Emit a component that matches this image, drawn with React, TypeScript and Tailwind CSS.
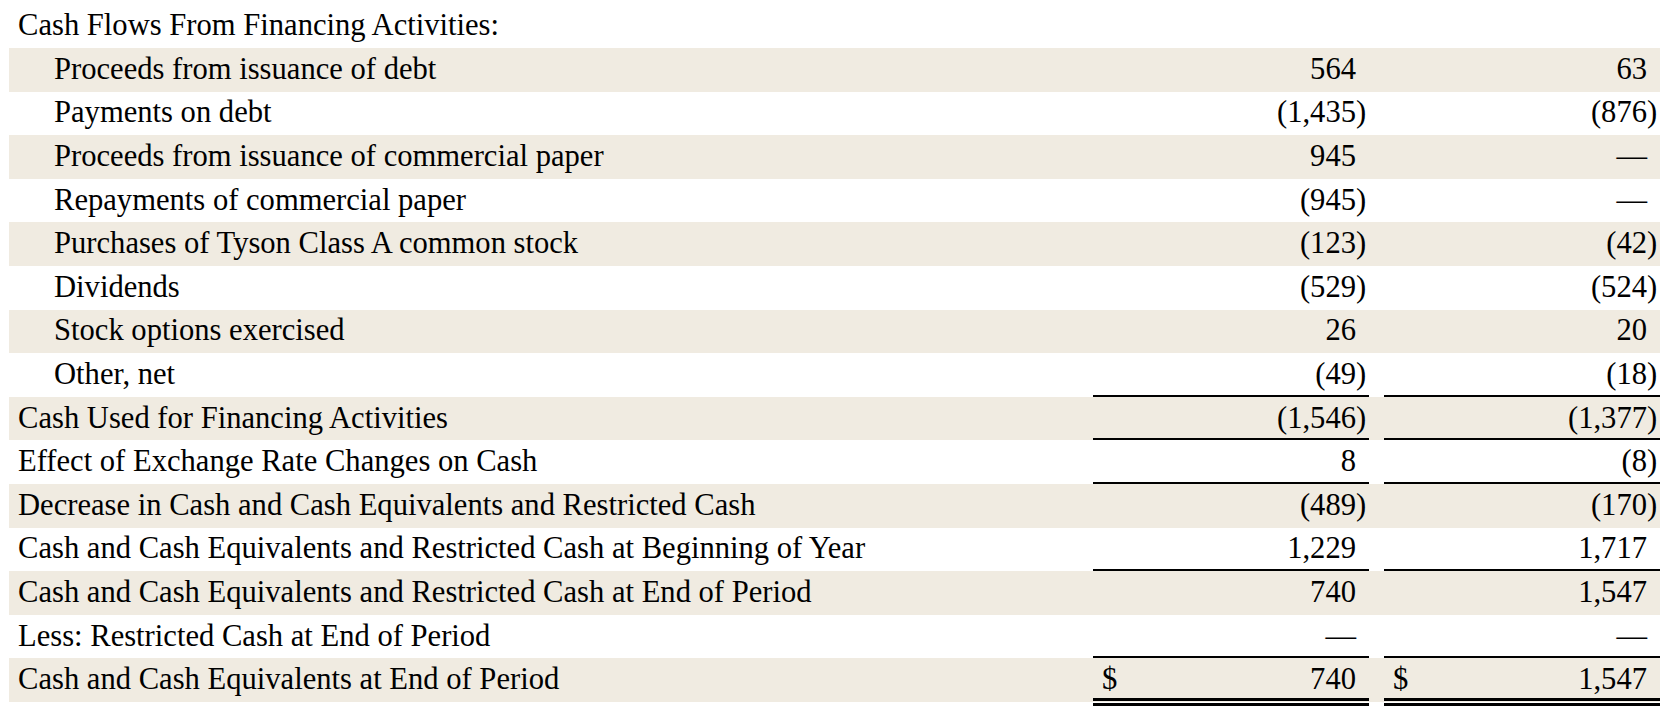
import React from 'react';

type Rule = 'none' | 'single' | 'double';

interface Line {
  label: string;
  indent?: boolean;
  cur: string;
  prior: string;
  rule?: Rule;
  dollar?: boolean;
}

const lines: Line[] = [
  { label: 'Proceeds from issuance of debt', indent: true, cur: '564', prior: '63' },
  { label: 'Payments on debt', indent: true, cur: '(1,435)', prior: '(876)' },
  { label: 'Proceeds from issuance of commercial paper', indent: true, cur: '945', prior: '—' },
  { label: 'Repayments of commercial paper', indent: true, cur: '(945)', prior: '—' },
  { label: 'Purchases of Tyson Class A common stock', indent: true, cur: '(123)', prior: '(42)' },
  { label: 'Dividends', indent: true, cur: '(529)', prior: '(524)' },
  { label: 'Stock options exercised', indent: true, cur: '26', prior: '20' },
  { label: 'Other, net', indent: true, cur: '(49)', prior: '(18)', rule: 'single' },
  { label: 'Cash Used for Financing Activities', cur: '(1,546)', prior: '(1,377)', rule: 'single' },
  { label: 'Effect of Exchange Rate Changes on Cash', cur: '8', prior: '(8)', rule: 'single' },
  { label: 'Decrease in Cash and Cash Equivalents and Restricted Cash', cur: '(489)', prior: '(170)' },
  { label: 'Cash and Cash Equivalents and Restricted Cash at Beginning of Year', cur: '1,229', prior: '1,717', rule: 'single' },
  { label: 'Cash and Cash Equivalents and Restricted Cash at End of Period', cur: '740', prior: '1,547' },
  { label: 'Less: Restricted Cash at End of Period', cur: '—', prior: '—', rule: 'single' },
  { label: 'Cash and Cash Equivalents at End of Period', cur: '740', prior: '1,547', rule: 'double', dollar: true },
];

const Amount: React.FC<{ value: string; rule?: Rule; dollar?: boolean }> = ({ value, rule = 'none', dollar }) => {
  // negative amounts hang the closing paren in its own slot, like the filing does
  const neg = value.endsWith(')');
  const body = neg ? value.slice(0, -1) : value;

  const ruleCls =
    rule === 'double'
      ? 'self-start h-[47.6px] pt-[4px] border-b-[8px] border-double border-black'
      : rule === 'single'
        ? 'h-full pt-[2px] border-b-2 border-black'
        : 'h-full';

  return (
    <div className={`flex w-[276px] shrink-0 items-center justify-between ${ruleCls}`}>
      <span className="pl-[9px]">{dollar ? '$' : ''}</span>
      <span className="flex items-center pr-[3px]">
        <span>{body}</span>
        <span className="inline-block w-[10px]">{neg ? ')' : ''}</span>
      </span>
    </div>
  );
};

export default function App() {
  return (
    <div className="min-h-[726px] w-[1670px] bg-white pl-[9px] font-['Liberation_Serif','Times_New_Roman',serif] text-[30.6px] text-black">
      <div className="w-[1651px]">
        <div className="flex h-[48px] items-center pl-[9px] pt-[4px]">Cash Flows From Financing Activities:</div>
        {lines.map((l, i) => (
          <div key={l.label} className={`flex h-[43.6px] items-center ${i % 2 === 0 ? 'bg-[#f0ebe1]' : 'bg-white'}`}>
            <div className={`flex-1 whitespace-nowrap ${l.indent ? 'pl-[45px]' : 'pl-[9px]'}`}>{l.label}</div>
            <Amount value={l.cur} rule={l.rule} dollar={l.dollar} />
            <div className="w-[15px] shrink-0" />
            <Amount value={l.prior} rule={l.rule} dollar={l.dollar} />
          </div>
        ))}
      </div>
    </div>
  );
}
